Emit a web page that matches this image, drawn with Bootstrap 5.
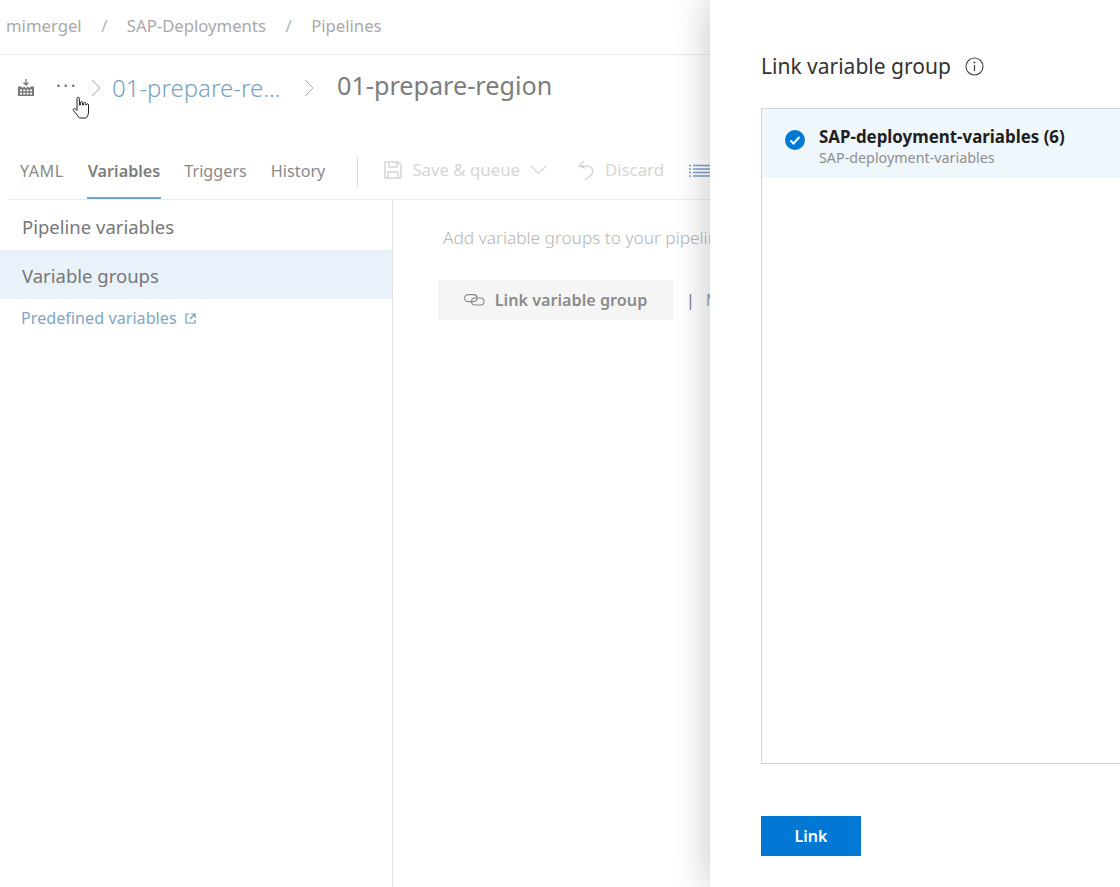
<!DOCTYPE html>
<html lang="en">
<head>
    <meta charset="UTF-8">
    <title>01-prepare-region - Pipelines</title>
    <link href="https://cdn.jsdelivr.net/npm/bootstrap@5.3.0/dist/css/bootstrap.min.css" rel="stylesheet">
    <style>
        html, body { height: 100%; overflow: hidden; }
        body { font-family: "Noto Sans", "Open Sans", sans-serif; background: #fff; }
        .page-wrap { height: 887px; width: 1120px; position: relative; overflow: hidden; }

        .top-crumbs { height: 55px; border-bottom: 1px solid #ececec; padding: 0 0 2px 6px; font-size: 16.700px; color: #a9a9a9; gap: 19.500px; }
        .crumb-sep { color: #b5b5b5; }

        .title-row { height: 95px; padding: 0 0 30px 18px; }
        .dots { font-size: 18px; color: #666; letter-spacing: 2.500px; margin-left: 22px; margin-top: -6px; line-height: 1; }
        .title-link { font-size: 24px; font-weight: 300; color: #7aa3c0; margin-left: 10px; width: 179px; white-space: nowrap; }
        .title-now { font-size: 25.200px; font-weight: 400; color: #7d7d7d; margin-left: 22px; padding-bottom: 4px; white-space: nowrap; }
        .chev { margin-left: 12px; }
        .cursor-hand { position: absolute; left: 72px; top: 96px; }

        .tab-row { height: 50px; margin-left: 8px; border-bottom: 1px solid #ececec; white-space: nowrap; }
        .tab-item { font-size: 16.200px; color: #8a8a8a; height: 49px; padding: 0 1px 4px; margin-left: 22px; display: flex; align-items: center; border-bottom: 2px solid transparent; }
        .tab-item:first-child { margin-left: 11px; letter-spacing: .5px; }
        .tab-on { font-weight: 600; color: #7d7d7d; border-bottom-color: #6ba6d8; }
        .tab-divider { width: 1px; height: 30px; background: #dcdcdc; margin: 0 26px 6px 31px; }
        .tool-item { font-size: 16.800px; color: #d6d6d6; margin-right: 30px; gap: 10px; padding-bottom: 10px; }
        .tool-last { margin-right: 25px; }

        .body-row { height: 688px; }
        .side-col { width: 393px; border-right: 1px solid #e2e2e2; flex: none; padding-top: 2px; }
        .side-item { height: 48px; padding: 2px 0 0 22px; font-size: 18.500px; color: #777; }
        .side-on { background: #e9f2fa; height: 49px; }
        .side-link { font-size: 16.200px; color: #7fa6c4; padding: 7px 0 0 21px; gap: 8px; }

        .content-col { padding: 25px 0 0 50px; white-space: nowrap; }
        .hint-text { font-size: 17.300px; line-height: 26px; color: #b5b5b5; font-weight: 300; height: 55px; }
        .link-btn { width: 235px; height: 40px; margin-left: -5px; background: #f5f5f5; font-size: 16.200px; font-weight: 600; color: #8b8b8b; gap: 10px; }
        .bar-sep { color: #777; margin-left: 13px; font-size: 16px; }
        .bar-more { color: #8ba8c4; margin-left: 11px; font-size: 16px; }

        .side-panel { position: absolute; left: 710px; top: 0; width: 410px; height: 887px; background: #fff; box-shadow: -8px 0 30px rgba(0,0,0,.16); padding: 0 0 0 51px; }
        .panel-head { height: 108px; padding-top: 25px; gap: 14px; }
        .panel-title { font-size: 21px; color: #333; font-weight: 400; }
        .pick-box { height: 656px; margin-right: -10px; border: 1px solid #d4d4d4; }
        .pick-row { height: 69px; background: #eff6fc; padding-left: 23px; gap: 14px; }
        .pick-check { margin-bottom: 8px; flex: none; }
        .pick-text { padding-top: 6px; }
        .pick-name { font-size: 16.900px; font-weight: 700; color: #201f1e; line-height: 21px; }
        .pick-sub { font-size: 14.300px; color: #8f8f8f; line-height: 21px; }
        .go-btn { width: 100px; height: 40px; margin-top: 52px; background: #0078d4; color: #fff; font-size: 16px; font-weight: 600; border-radius: 0; border: 0; padding: 0; }
    </style>
</head>
<body>
<div class="page-wrap">

    <!-- Fil d'ariane -->
    <div class="top-crumbs d-flex align-items-center">
        <span>mimergel</span><span class="crumb-sep">/</span>
        <span>SAP-Deployments</span><span class="crumb-sep">/</span>
        <span>Pipelines</span>
    </div>

    <!-- Titre -->
    <div class="title-row d-flex align-items-center">
        <svg width="16" height="18" viewBox="0 0 16 18">
            <path d="M8 0v5.500M5.500 3.500L8 6l2.500-2.500" fill="none" stroke="#777" stroke-width="1.300"/>
            <path d="M0 7.500h3l1.500 1.500L6 7.500l2 1.500 2-1.500 1.500 1.500 1.500-1.500h3V17H0z" fill="#777"/>
            <path d="M2 10.500h2v1.800H2zM5.300 10.500h2v1.800h-2zM8.700 10.500h2v1.800h-2zM12 10.500h2v1.800h-2zM2 13.800h2v1.800H2zM5.300 13.800h2v1.800h-2zM8.700 13.800h2v1.800h-2zM12 13.800h2v1.800h-2z" fill="#fff"/>
        </svg>
        <span class="dots">&middot;&middot;&middot;</span>
        <svg class="chev" width="12" height="18" viewBox="0 0 12 18"><path d="M2 1l8 8-8 8" fill="none" stroke="#aaa" stroke-width="1"/></svg>
        <span class="title-link">01-prepare-re...</span>
        <svg class="chev" width="12" height="18" viewBox="0 0 12 18"><path d="M2 1l8 8-8 8" fill="none" stroke="#aaa" stroke-width="1"/></svg>
        <span class="title-now">01-prepare-region</span>
    </div>
    <svg class="cursor-hand" width="18" height="24" viewBox="0 0 18 24">
        <path d="M5 10V2.500a1.200 1.200 0 0 1 2.400 0V9h1V6.800a1.100 1.100 0 0 1 2.200 0V9h1V7.500a1.100 1.100 0 0 1 2.200 0V9h.6V8.500a1.100 1.100 0 0 1 2.100.500v7c0 3-1.500 5.500-2.500 6H7.500L1.500 14.500c-1-1.500.8-2.500 1.800-1.500L5 14.500z" fill="#fff" stroke="#222" stroke-width="1"/>
    </svg>

    <!-- Onglets et actions -->
    <div class="tab-row d-flex align-items-center">
        <div class="tab-item">YAML</div>
        <div class="tab-item tab-on">Variables</div>
        <div class="tab-item">Triggers</div>
        <div class="tab-item">History</div>
        <div class="tab-divider"></div>
        <div class="tool-item d-flex align-items-center">
            <svg width="18" height="18" viewBox="0 0 18 18"><path d="M1 1h13l3 3v13H1z M5 1v5h8V1 M4 17v-6h10v6" fill="none" stroke="#d6d6d6" stroke-width="1.500"/></svg>
            <span>Save &amp; queue</span>
            <svg width="17" height="10" viewBox="0 0 17 10"><path d="M1 1l7.500 7.500L16 1" fill="none" stroke="#d6d6d6" stroke-width="1.200"/></svg>
        </div>
        <div class="tool-item tool-last d-flex align-items-center">
            <svg width="18" height="20" viewBox="0 0 18 20"><path d="M7 1L2 6l6 2M2 6h7c4 0 7 2 7 5.500 0 2.500-2 4-4 5.500l-4 2.500" fill="none" stroke="#d6d6d6" stroke-width="1.400"/></svg>
            <span>Discard</span>
        </div>
        <svg class="mb-2" width="22" height="14" viewBox="0 0 22 14"><path d="M4 1.500h18M4 5h18M4 8.500h18M4 12h18" stroke="#7f9fc4" stroke-width="1.300"/><path d="M0 1.500h2M0 5h2M0 8.500h2M0 12h2" stroke="#7f9fc4" stroke-width="1.300"/></svg>
    </div>

    <div class="body-row d-flex">
        <!-- Menu de gauche -->
        <div class="side-col">
            <div class="side-item d-flex align-items-center">Pipeline variables</div>
            <div class="side-item side-on d-flex align-items-center">Variable groups</div>
            <div class="side-link d-flex align-items-center">
                <span>Predefined variables</span>
                <svg width="11" height="11" viewBox="0 0 11 11"><path d="M4 1H1v9h9V7M6 1h4v4M10 1L5 6" fill="none" stroke="#6f9cbd" stroke-width="1.200"/></svg>
            </div>
        </div>

        <!-- Contenu -->
        <div class="content-col">
            <div class="hint-text">Add variable groups to your pipeline</div>
            <div class="d-flex align-items-center">
                <div class="link-btn d-flex align-items-center justify-content-center">
                    <svg width="21" height="12" viewBox="0 0 21 12"><rect x=".6" y=".6" width="12.500" height="7" rx="3.500" fill="none" stroke="#888" stroke-width="1.100"/><rect x="7.500" y="4" width="12.500" height="7" rx="3.500" fill="none" stroke="#888" stroke-width="1.100"/></svg>
                    <span>Link variable group</span>
                </div>
                <span class="bar-sep">|</span>
                <span class="bar-more">Manage</span>
            </div>
        </div>
    </div>

    <!-- Panneau lateral -->
    <div class="side-panel">
        <div class="panel-head d-flex align-items-center">
            <span class="panel-title">Link variable group</span>
            <svg width="19" height="19" viewBox="0 0 19 19"><circle cx="9.500" cy="9.500" r="8.500" fill="none" stroke="#444" stroke-width="1.100"/><path d="M9.500 8v6" stroke="#444" stroke-width="1.200"/><circle cx="9.500" cy="5.500" r=".9" fill="#444"/></svg>
        </div>
        <div class="pick-box">
            <div class="pick-row d-flex align-items-center">
                <svg class="pick-check" width="20" height="20" viewBox="0 0 20 20"><circle cx="10" cy="10" r="10" fill="#0078d4"/><path d="M5.500 10.500l3 3 6-6.500" fill="none" stroke="#fff" stroke-width="2"/></svg>
                <div class="pick-text">
                    <div class="pick-name">SAP-deployment-variables (6)</div>
                    <div class="pick-sub">SAP-deployment-variables</div>
                </div>
            </div>
        </div>
        <button type="button" class="btn go-btn">Link</button>
    </div>
</div>
<script src="https://cdn.jsdelivr.net/npm/bootstrap@5.3.0/dist/js/bootstrap.bundle.min.js"></script>
</body>
</html>
